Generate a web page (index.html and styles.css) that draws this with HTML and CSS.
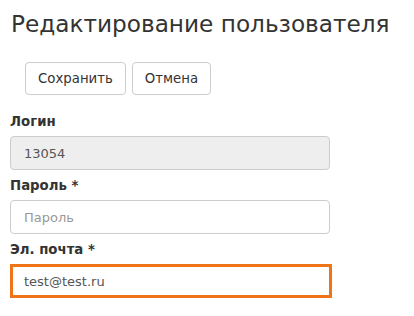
FILE: index.html
```html
<!DOCTYPE html>
<html lang="ru">
<head>
<meta charset="utf-8">
<title>Редактирование пользователя</title>
<link rel="stylesheet" href="styles.css">
</head>
<body>
<div class="page">
  <h1 class="title">Редактирование пользователя</h1>
  <div class="actions">
    <button class="btn" type="button">Сохранить</button>
    <button class="btn" type="button">Отмена</button>
  </div>
  <form class="form">
    <div class="group">
      <label class="label">Логин</label>
      <input class="field field-disabled" type="text" value="13054" readonly>
    </div>
    <div class="group">
      <label class="label">Пароль *</label>
      <input class="field" type="password" placeholder="Пароль">
    </div>
    <div class="group">
      <label class="label">Эл. почта *</label>
      <input class="field field-focus" type="text" value="test@test.ru">
    </div>
  </form>
</div>
</body>
</html>
```
FILE: styles.css
```css
html, body {
  margin: 0;
  padding: 0;
  background: #fff;
}
body {
  font-family: "DejaVu Sans", Verdana, sans-serif;
  color: #333;
}
.page {
  padding: 10px 10px 0 11px;
}
.title {
  margin: 0;
  font-size: 23.2px;
  line-height: 28px;
  font-weight: normal;
  color: #333;
}
.actions {
  display: flex;
  gap: 6px;
  margin: 24px 0 0 14px;
}
.btn {
  height: 33px;
  padding: 0 12px;
  border: 1px solid #ccc;
  border-radius: 4px;
  background: #fff;
  color: #333;
  font-family: "DejaVu Sans", Verdana, sans-serif;
  font-size: 13.3px;
}
.form {
  margin-top: 11px;
  margin-left: -1px;
}
.group {
  display: flex;
  flex-direction: column;
}
.label {
  margin: 6px 0 4px;
  font-size: 13.3px;
  line-height: 20px;
  font-weight: bold;
  color: #333;
}
.field {
  box-sizing: border-box;
  width: 320px;
  height: 34px;
  margin: 0;
  padding: 0 13px;
  border: 1px solid #ccc;
  border-radius: 4px;
  background: #fff;
  color: #555;
  font-family: "DejaVu Sans", Verdana, sans-serif;
  font-size: 13px;
  outline: none;
}
.field::placeholder {
  color: #999;
}
.field-disabled {
  background: #eee;
}
.field-focus {
  width: 322px;
  border: 3px solid #ef7317;
  border-radius: 0;
  padding-left: 11px;
}
```
